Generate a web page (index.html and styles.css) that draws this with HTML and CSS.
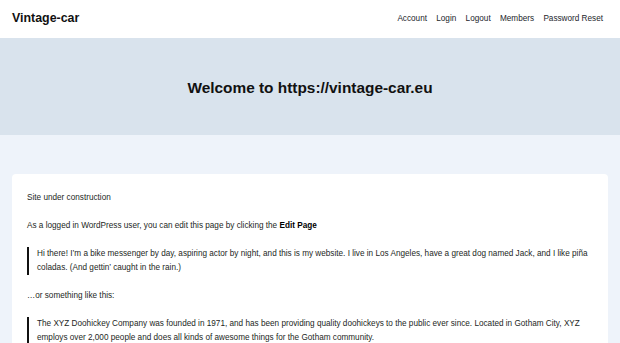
FILE: index.html
```html
<!DOCTYPE html>
<html lang="en">
<head>
    <meta charset="UTF-8">
    <meta name="viewport" content="width=device-width, initial-scale=1.0">
    <title>Vintage-car</title>
    <link rel="stylesheet" href="styles.css">
</head>
<body>
    <header class="site-header">
        <a href="#" class="site-title">Vintage-car</a>
        <nav class="site-nav">
            <a href="#">Account</a>
            <a href="#">Login</a>
            <a href="#">Logout</a>
            <a href="#">Members</a>
            <a href="#">Password Reset</a>
        </nav>
    </header>

    <section class="hero">
        <h1 class="hero-title">Welcome to https://vintage-car.eu</h1>
    </section>

    <main class="page">
        <article class="card">
            <p>Site under construction</p>
            <p>As a logged in WordPress user, you can edit this page by clicking the <strong>Edit Page</strong></p>
            <blockquote>
                <p>Hi there! I’m a bike messenger by day, aspiring actor by night, and this is my website. I live in Los Angeles, have a great dog named Jack, and I like piña coladas. (And gettin’ caught in the rain.)</p>
            </blockquote>
            <p>…or something like this:</p>
            <blockquote>
                <p>The XYZ Doohickey Company was founded in 1971, and has been providing quality doohickeys to the public ever since. Located in Gotham City, XYZ employs over 2,000 people and does all kinds of awesome things for the Gotham community.</p>
            </blockquote>
        </article>
    </main>
</body>
</html>
```

FILE: styles.css
```css
* {
    box-sizing: border-box;
    margin: 0;
    padding: 0;
}

body {
    font-family: 'Liberation Sans', Arial, sans-serif;
    background-color: #eef3fa;
    color: #1d1f24;
    font-size: 8.2px;
}

a {
    color: inherit;
    text-decoration: none;
}

.site-header {
    height: 38px;
    background-color: #ffffff;
    display: flex;
    align-items: center;
    justify-content: space-between;
    padding: 0 17px 2px 12px;
}

.site-title {
    font-size: 12.4px;
    font-weight: bold;
    color: #111111;
}

.site-nav {
    display: flex;
    gap: 9.3px;
}

.site-nav a {
    font-size: 8.2px;
    color: #22252b;
}

.hero {
    height: 97px;
    background-color: #d9e3ed;
    display: flex;
    align-items: center;
    justify-content: center;
}

.hero-title {
    font-size: 15.4px;
    font-weight: bold;
    color: #111111;
    margin-top: 2px;
}

.page {
    padding: 39px 12px 0;
}

.card {
    background-color: #ffffff;
    border-radius: 4px;
    padding: 17px 15px 20px;
    min-height: 200px;
}

.card p {
    line-height: 14px;
    margin-bottom: 14px;
}

.card strong {
    color: #000000;
}

blockquote {
    border-left: 2.5px solid #111111;
    padding-left: 8px;
    margin-bottom: 14px;
}

blockquote p {
    margin-bottom: 0 !important;
}
```
